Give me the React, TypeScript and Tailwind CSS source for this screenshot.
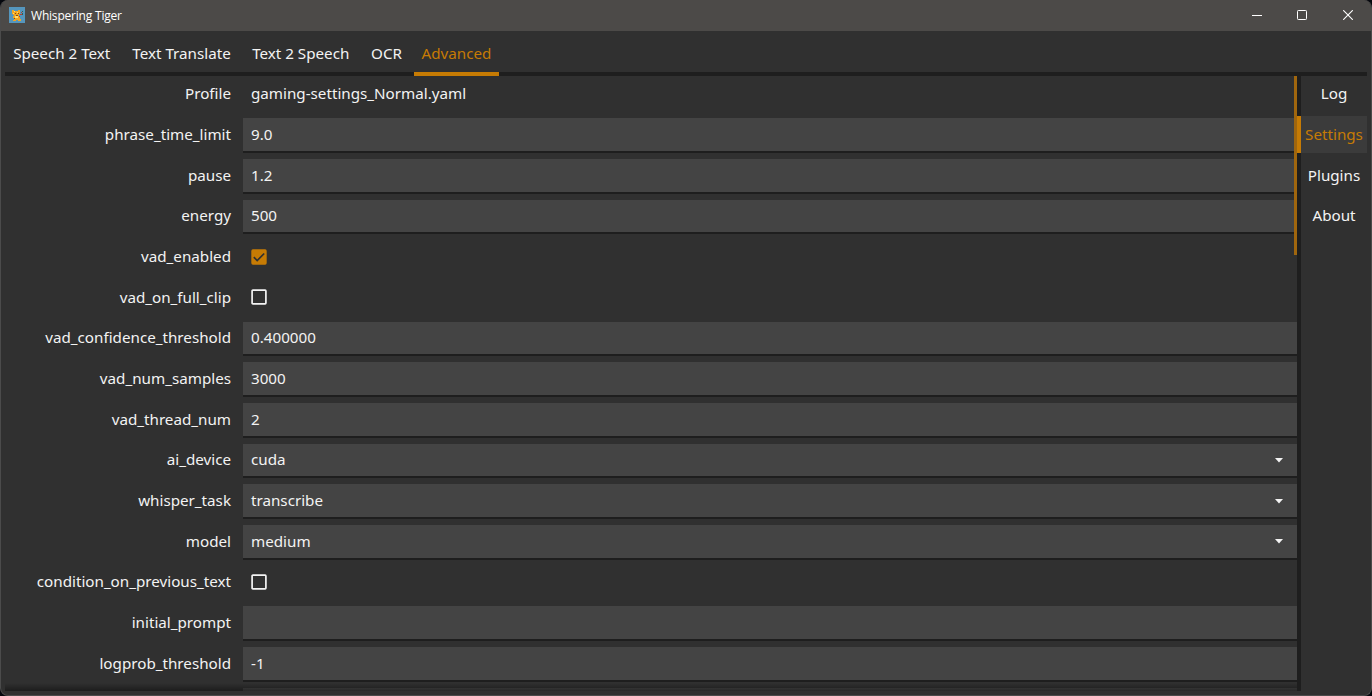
import React from "react";

type Row = {
  label: string;
  kind: "text" | "input" | "check" | "select";
  value?: string;
  checked?: boolean;
  height: string;
  iconTop?: string;
};

const H40 = "h-[40px] leading-[30px]";
const H41 = "h-[41px] leading-[32px]";

const rows: Row[] = [
  { label: "Profile", kind: "text", value: "gaming-settings_Normal.yaml", height: H41 },
  { label: "phrase_time_limit", kind: "input", value: "9.0", height: H41 },
  { label: "pause", kind: "input", value: "1.2", height: H41 },
  { label: "energy", kind: "input", value: "500", height: H40 },
  { label: "vad_enabled", kind: "check", checked: true, height: H41, iconTop: "mt-[9px]" },
  { label: "vad_on_full_clip", kind: "check", checked: false, height: H41, iconTop: "mt-[8px]" },
  { label: "vad_confidence_threshold", kind: "input", value: "0.400000", height: H40 },
  { label: "vad_num_samples", kind: "input", value: "3000", height: H41 },
  { label: "vad_thread_num", kind: "input", value: "2", height: H41 },
  { label: "ai_device", kind: "select", value: "cuda", height: H40, iconTop: "mt-[14px]" },
  { label: "whisper_task", kind: "select", value: "transcribe", height: H41, iconTop: "mt-[15px]" },
  { label: "model", kind: "select", value: "medium", height: H41, iconTop: "mt-[14px]" },
  { label: "condition_on_previous_text", kind: "check", checked: false, height: H40, iconTop: "mt-[8px]" },
  { label: "initial_prompt", kind: "input", value: "", height: H41 },
  { label: "logprob_threshold", kind: "input", value: "-1", height: H41 },
  { label: "", kind: "input", value: "", height: H41 },
];

const tabs = [
  { name: "Speech 2 Text", width: "w-[115px] pr-[1.5px]" },
  { name: "Text Translate", width: "w-[116px] pr-px" },
  { name: "Text 2 Speech", width: "w-[115px] pr-[1.5px]" },
  { name: "OCR", width: "w-[47px]" },
  { name: "Advanced", width: "w-[85px]" },
];

function TigerIcon() {
  return (
    <svg width="16" height="16" viewBox="0 0 16 16" shapeRendering="crispEdges">
      <rect width="16" height="16" rx="1.5" fill="#5596bd" />
      <path d="M3 3h2v1h4V3h2v4h-1v2h1v3h1v2H9v-1H7v1H4v-1h1v-2H4V9h1V8H4V7H3z" fill="#f4a51f" />
      <path d="M5 4h1v1H5zM8 5h1v1H8zM4 6h1v1H4zM6 9h3v2H6z" fill="#fbdc72" />
      <path d="M6 6h1v1H6zM9 6h1v1H9zM7 8h2v1H7zM5 11h1v1H5z" fill="#8a4a14" />
      <path d="M11 7h2v1h-2zM12 5h1v1h-1zM10 9h1v1h-1z" fill="#bc3d2f" />
      <path d="M13 6h1v2h-1zM13 4h1v1h-1z" fill="#315f50" />
    </svg>
  );
}

function Checkbox({ checked, top }: { checked?: boolean; top?: string }) {
  return (
    <svg className={`ml-2 shrink-0 ${top ?? ""}`} width="16" height="16" viewBox="0 0 16 16">
      {checked ? (
        <>
          <rect x="0.3" y="0.3" width="15.4" height="15.4" rx="1.6" fill="#c67b04" />
          <path d="M2.8 8.2L6.2 11.6L13.2 4.5" fill="none" stroke="#303030" strokeWidth="1.7" />
        </>
      ) : (
        <rect x="1.1" y="1.1" width="13.8" height="13.8" rx="0.8" fill="none" stroke="#f3f3f3" strokeWidth="1.7" />
      )}
    </svg>
  );
}

function Field({ row }: { row: Row }) {
  if (row.kind === "check") {
    return (
      <div className="flex h-full flex-1 items-start">
        <Checkbox checked={row.checked} top={row.iconTop} />
      </div>
    );
  }
  if (row.kind === "text") {
    return <div className="flex-1 pl-2">{row.value}</div>;
  }
  return (
    <div className="flex h-full flex-1 pb-[6px]">
      <div className="flex flex-1 justify-between border-b-2 border-[#1e1e1e] bg-[#444444] pr-[14px] pl-2">
        <span>{row.value}</span>
        {row.kind === "select" && (
          <svg className={row.iconTop} width="8" height="5" viewBox="0 0 8 5">
            <path d="M0 0H8L4 4.4z" fill="#f3f3f3" />
          </svg>
        )}
      </div>
    </div>
  );
}

export default function App() {
  return (
    <div className="h-[696px] w-[1372px] overflow-hidden bg-[#05070d]">
      <div className="flex h-full flex-col overflow-hidden rounded-[8px] border-x border-b border-[#4b4b4b] bg-[#303030] font-['Noto_Sans',sans-serif] text-[15.2px] text-[#f3f3f3]">
        <header className="-mx-px flex h-[31px] shrink-0 items-center bg-[#4c4a48] pb-px pl-[9px]">
          <TigerIcon />
          <span className="mt-px ml-[6px] font-['Open_Sans',sans-serif] text-[12px] tracking-[-0.2px] text-white">Whispering Tiger</span>
          <div className="ml-auto flex items-center pr-[19px]">
            <svg className="mr-[35px]" width="10" height="10" viewBox="0 0 10 10"><path d="M0 5.5H10" stroke="#fff" /></svg>
            <svg className="mr-[36px]" width="10" height="10" viewBox="0 0 10 10"><rect x="0.5" y="0.5" width="9" height="9" rx="0.8" fill="none" stroke="#fff" /></svg>
            <svg width="10" height="10" viewBox="0 0 10 10"><path d="M0.2 0.2L9.8 9.8M9.8 0.2L0.2 9.8" stroke="#fff" strokeWidth="1.1" /></svg>
          </div>
        </header>
        <nav className="mr-1 ml-1 flex h-[45px] shrink-0 gap-[4px] border-b-4 border-[#1e1e1e] pt-[4px]">
          {tabs.map((t) => (
            <button
              key={t.name}
              className={`${t.width} -mb-1 flex justify-center border-b-4 pb-0 leading-[37px] whitespace-nowrap ${t.name === "Advanced" ? "border-[#c67b04] text-[#c67b04]" : "border-transparent"}`}
            >
              {t.name}
            </button>
          ))}
        </nav>
        <div className="mr-1 mb-1 ml-1 flex min-h-0 flex-1">
          <main className="relative w-[1292px] overflow-hidden">
            <div className="flex flex-col pt-px">
              {rows.map((row, i) => (
                <div key={i} className={`flex shrink-0 ${row.height}`}>
                  <label className="w-[226px] shrink-0 text-right">{row.label}</label>
                  <div className="w-3 shrink-0" />
                  <Field row={row} />
                </div>
              ))}
            </div>
            <div className="absolute top-0 right-0 h-[179px] w-[3px] bg-[#a0660e]" />
            <div className="absolute bottom-0 left-0 h-2 w-full bg-linear-to-b from-transparent to-black/40" />
          </main>
          <aside className="flex flex-1">
            <div className="flex w-1 flex-col bg-[#1e1e1e] pt-[40px]">
              <div className="h-[37px] bg-[#c67b04]" />
            </div>
            <div className="flex flex-1 flex-col gap-[4px] text-center leading-[36px]">
              <div className="h-[36px] leading-[35px]">Log</div>
              <div className="h-[37px] bg-[#3b3b3b] text-[#c67b04]">Settings</div>
              <div className="h-[36px]">Plugins</div>
              <div className="h-[37px]">About</div>
            </div>
          </aside>
        </div>
      </div>
    </div>
  );
}
